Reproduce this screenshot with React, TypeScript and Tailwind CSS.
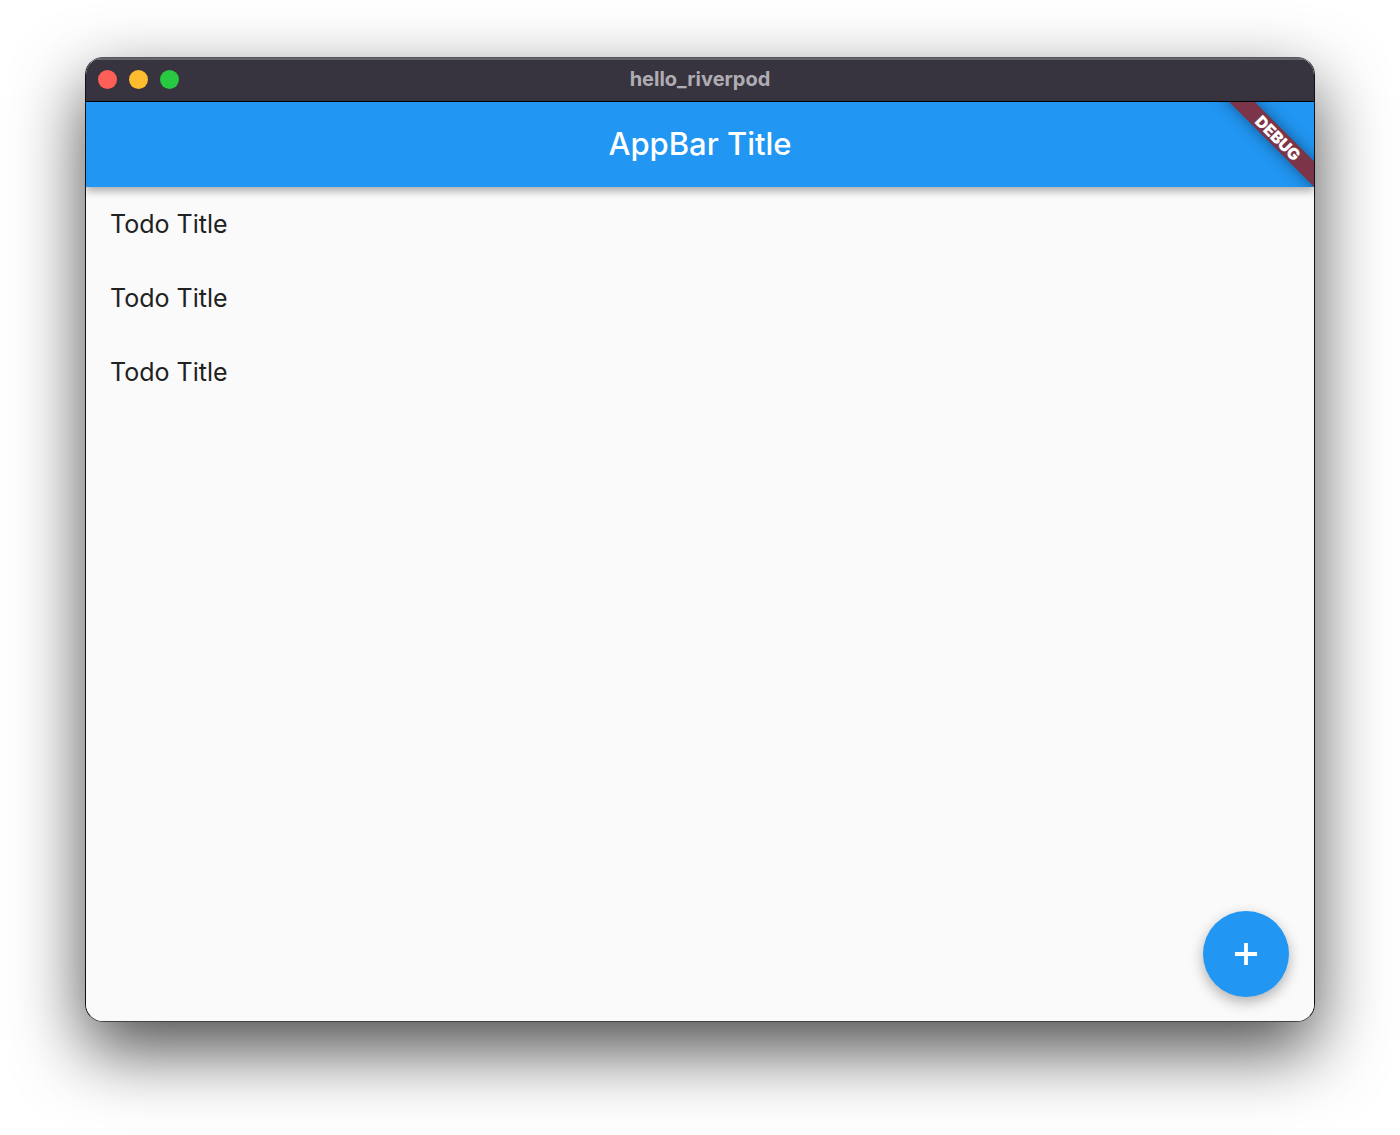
const todos = [
  { id: 1, title: 'Todo Title' },
  { id: 2, title: 'Todo Title' },
  { id: 3, title: 'Todo Title' },
];

function TitleBar() {
  return (
    <header className="grid h-11 grid-cols-[1fr_auto_1fr] items-center border-b border-black bg-[#38343f] px-3 shadow-[inset_0_2px_0_#66646b]">
      <div className="flex gap-3">
        <button type="button" aria-label="Close" className="size-[19px] rounded-full bg-[#ff5f57]" />
        <button type="button" aria-label="Minimize" className="size-[19px] rounded-full bg-[#febc2e]" />
        <button type="button" aria-label="Zoom" className="size-[19px] rounded-full bg-[#28c840]" />
      </div>
      <span className="pb-0.5 text-xl font-bold leading-6 text-[#afadb3]">hello_riverpod</span>
    </header>
  );
}

function DebugBanner() {
  return (
    <div className="pointer-events-none absolute -right-[34px] top-[27px] flex h-[18px] w-[140px] rotate-45 items-center justify-center bg-[#7b3448] text-base font-black leading-4 text-white shadow-[0_0_16px_rgba(0,0,0,0.42)]">
      DEBUG
    </div>
  );
}

function AppBar() {
  return (
    <div className="relative z-10 flex h-[85px] items-center justify-center overflow-hidden bg-[#2196f3] pb-0.5 shadow-[0_4px_8px_rgba(0,0,0,0.32)]">
      <h1 className="text-[31px] font-medium leading-9 text-white">AppBar Title</h1>
      <DebugBanner />
    </div>
  );
}

export default function App() {
  return (
    <div className="flex min-h-screen flex-col bg-white px-[85px] pb-[113px] pt-[57px] font-[Inter,'Liberation_Sans',sans-serif]">
      <div className="flex flex-1 flex-col rounded-[18px] border border-[#111] border-t-[#56555a] border-b-[#444] shadow-[0_28px_70px_rgba(0,0,0,0.7)]">
        <div className="flex flex-1 flex-col overflow-hidden rounded-[17px] bg-[#fafafa]">
          <TitleBar />
          <AppBar />
          <main className="flex flex-1 flex-col justify-between">
            <ul>
              {todos.map((todo) => (
                <li key={todo.id} className="flex h-[74px] items-center px-6 text-[25px] leading-8 text-[#212121]">
                  {todo.title}
                </li>
              ))}
            </ul>
            <button
              type="button"
              aria-label="Add todo"
              className="mb-6 mr-[25px] flex size-[86px] items-center justify-center self-end rounded-full bg-[#2196f3] text-white shadow-[0_5px_14px_rgba(0,0,0,0.3)]"
            >
              <svg viewBox="0 0 24 24" className="size-[38px]" fill="currentColor" aria-hidden="true">
                <path d="M19 13.2h-5.8V19h-2.4v-5.8H5v-2.4h5.8V5h2.4v5.8H19v2.4z" />
              </svg>
            </button>
          </main>
        </div>
      </div>
    </div>
  );
}
